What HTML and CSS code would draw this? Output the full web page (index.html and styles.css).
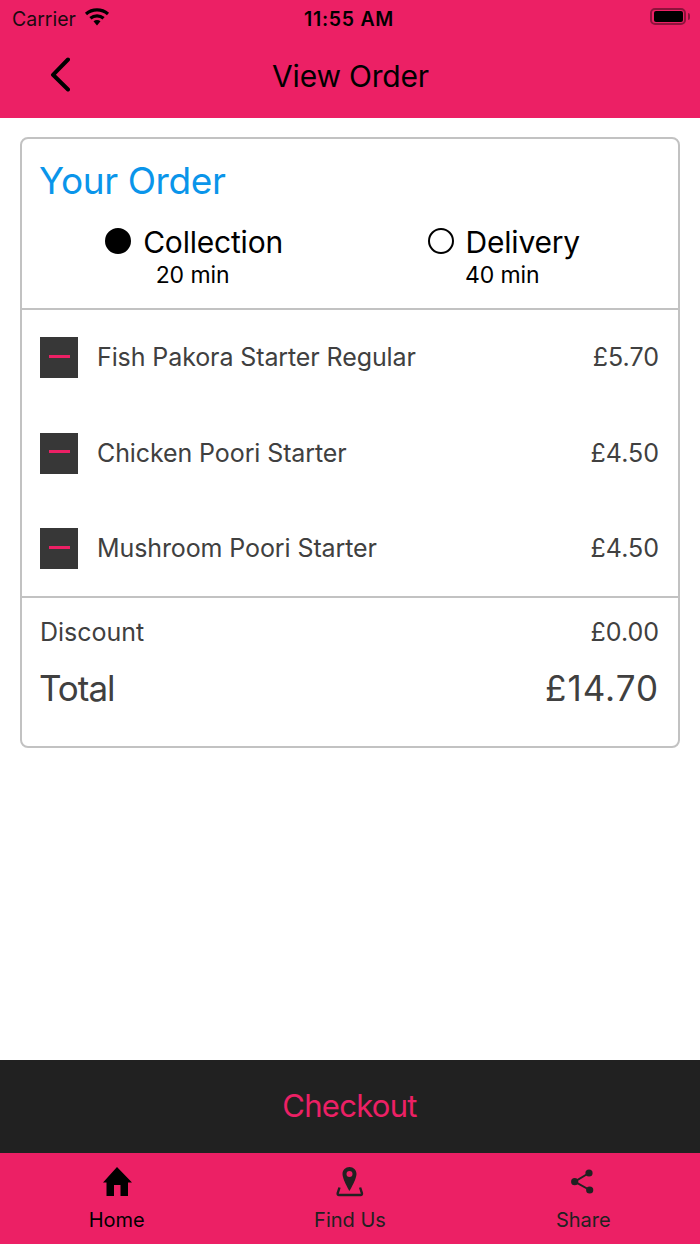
FILE: index.html
```html
<!DOCTYPE html>
<html lang="en">
<head>
<meta charset="utf-8">
<title>View Order</title>
<link rel="stylesheet" href="styles.css">
</head>
<body>
<div class="app">
  <header class="top">
    <div class="status">
      <div class="status-left">
        <span class="carrier">Carrier</span>
        <svg class="wifi" width="26" height="18" viewBox="0 0 26 18"><path d="M2 6C8.300.6 17.700.6 24 6M6.400 10.300C10.200 7 15.800 7 19.600 10.300" fill="none" stroke="#000" stroke-width="3.200"/><path d="M9.500 13.300C11.500 11.700 14.500 11.700 16.500 13.300L13 17.500z"/></svg>
      </div>
      <span class="time">11:55 AM</span>
      <div class="battery"><span class="battery-level"></span><span class="battery-cap"></span></div>
    </div>
    <div class="navbar">
      <svg class="back" width="24" height="38" viewBox="0 0 24 38"><path d="M22 3.500 7 18.800l15 14.700" fill="none" stroke="#000" stroke-width="4" stroke-linecap="round" stroke-linejoin="round"/></svg>
      <h1 class="title">View Order</h1>
    </div>
  </header>

  <main class="content">
    <section class="card">
      <div class="card-head">
        <h2 class="your-order">Your Order</h2>
        <div class="options">
          <div class="option option-collection">
            <div class="option-main"><span class="radio radio-on"></span><span class="option-name">Collection</span></div>
            <div class="option-time">20 min</div>
          </div>
          <div class="option option-delivery">
            <div class="option-main"><span class="radio"></span><span class="option-name">Delivery</span></div>
            <div class="option-time">40 min</div>
          </div>
        </div>
      </div>
      <div class="items">
        <div class="item"><span class="minus"><span class="minus-bar"></span></span><span class="item-name">Fish Pakora Starter Regular</span><span class="item-price">£5.70</span></div>
        <div class="item"><span class="minus"><span class="minus-bar"></span></span><span class="item-name">Chicken Poori Starter</span><span class="item-price">£4.50</span></div>
        <div class="item"><span class="minus"><span class="minus-bar"></span></span><span class="item-name">Mushroom Poori Starter</span><span class="item-price">£4.50</span></div>
      </div>
      <div class="totals">
        <div class="row discount"><span>Discount</span><span>£0.00</span></div>
        <div class="row total"><span class="total-label">Total</span><span class="total-value">£14.70</span></div>
      </div>
    </section>
  </main>

  <button class="checkout">Checkout</button>

  <nav class="tabs">
    <div class="tab tab-active">
      <svg width="36" height="36" viewBox="0 0 36 36"><path d="M18 4 4 19.500h3.500V33H15V22h6.500v11H29V19.500h4z" fill="#000"/></svg>
      <span class="tab-label">Home</span>
    </div>
    <div class="tab">
      <svg width="36" height="36" viewBox="0 0 36 36"><path d="M17.500 4C13.600 4 10.500 7.100 10.500 11c0 5.500 7 17 7 17s7-11.500 7-17c0-3.900-3.100-7-7-7zm0 4a3 3 0 1 1 0 6 3 3 0 0 1 0-6z" fill="#212121" fill-rule="evenodd"/><path d="M7.500 24.500 5.700 30.200c-.3 1 .2 1.800 1.300 1.800h21.600c1.100 0 1.600-.8 1.300-1.800l-1.800-5.700" fill="none" stroke="#212121" stroke-width="2.400"/></svg>
      <span class="tab-label">Find Us</span>
    </div>
    <div class="tab">
      <svg width="36" height="36" viewBox="0 0 36 36"><g fill="#212121"><circle cx="24" cy="10" r="3.600"/><circle cx="9.700" cy="18.700" r="3.600"/><circle cx="24.700" cy="27" r="3.600"/></g><path d="M24 10 9.700 18.700 24.700 27" fill="none" stroke="#212121" stroke-width="2"/></svg>
      <span class="tab-label">Share</span>
    </div>
  </nav>
</div>
</body>
</html>
```

FILE: styles.css
```css
* { box-sizing: border-box; margin: 0; padding: 0; }
html, body { height: 100%; }
body { background: #fff; font-family: "Inter", "Liberation Sans", sans-serif; color: #000; }
.app { width: 700px; height: 1244px; display: flex; flex-direction: column; overflow: hidden; }

.top { height: 118px; background: #ec2065; flex: none; }
.status { height: 37px; padding: 4px 14px 0 12px; display: grid; grid-template-columns: 1fr auto 1fr; align-items: center; }
.status-left { display: flex; align-items: center; gap: 8px; margin-top: -4px; }
.carrier { font-size: 19.500px; color: #1a0a10; }
.wifi { margin-top: -4px; }
.time { font-size: 19.500px; font-weight: 600; letter-spacing: .7px; margin-top: -4px; }
.battery { justify-self: end; width: 36px; height: 17px; display: flex; align-items: center; margin-top: -8px; position: relative; border: 2px solid rgba(0,0,0,.4); border-radius: 5px; padding: 1px 1px 1px 2px; }
.battery-level { width: 100%; height: 100%; background: #000; border-radius: 2px; }
.battery-cap { position: absolute; right: -6px; top: 3px; width: 2px; height: 7px; background: rgba(0,0,0,.4); border-radius: 0 2px 2px 0; }

.navbar { height: 81px; display: flex; align-items: center; position: relative; padding-left: 46px; padding-bottom: 6px; }
.back { flex: none; }
.title { position: absolute; left: 1px; right: 0; top: 19px; text-align: center; font-size: 30px; line-height: 40px; font-weight: 400; letter-spacing: -.2px; }

.content { flex: 1; padding: 19px 20px 0; }
.card { height: 611px; border: 2px solid #c2c2c2; border-radius: 8px; display: flex; flex-direction: column; }
.card-head { height: 171px; border-bottom: 2px solid #c2c2c2; padding: 20px 18px 0; flex: none; }
.your-order { font-size: 37px; line-height: 44px; font-weight: 400; color: #0a95ea; letter-spacing: -.4px; margin-left: -1px; }
.options { display: flex; margin: 21px 0 0 12.500px; }
.option { display: flex; flex-direction: column; align-items: center; }
.option-collection { width: 290px; }
.option-delivery { width: 320px; margin-left: 12px; }
.option-main { display: flex; align-items: center; gap: 12px; height: 36px; }
.radio { width: 26px; height: 26px; border: 2.500px solid #000; border-radius: 50%; flex: none; margin-top: -2px; }
.radio-on { background: #000; }
.option-name { font-size: 30px; line-height: 36px; letter-spacing: -.2px; }
.option-time { font-size: 23px; line-height: 28px; margin: 1px 3px 0 0; letter-spacing: -.1px; }

.items { height: 288px; border-bottom: 2px solid #c2c2c2; padding: 27px 18px 0; flex: none; display: flex; flex-direction: column; gap: 54px; }
.item { height: 41.500px; display: flex; align-items: center; color: #404040; font-size: 25px; }
.minus { width: 38px; height: 41px; background: #373737; display: flex; align-items: center; justify-content: center; flex: none; }
.minus-bar { width: 21px; height: 3px; background: #ec2065; margin-top: -3px; }
.item-name { margin-left: 19px; flex: 1; letter-spacing: -.1px; padding-bottom: 1px; }
.item-price { margin-right: 1px; padding-bottom: 1px; }

.totals { padding: 17px 18px 0 18px; color: #404040; }
.row { display: flex; justify-content: space-between; }
.discount { font-size: 25px; line-height: 34px; padding-right: 1px; }
.total { font-size: 35px; line-height: 42px; margin-top: 18px; padding-right: 1px; }
.total-label { letter-spacing: -1px; margin-left: -1px; }
.total-value { letter-spacing: 1px; }

.checkout { height: 93px; flex: none; background: #212121; border: none; color: #ec2065; font: 400 31px "Inter", "Liberation Sans", sans-serif; width: 100%; letter-spacing: -.7px; padding: 0 1px 2px 0; }

.tabs { height: 91px; flex: none; background: #ec2065; display: flex; }
.tab { width: 233.330px; display: flex; flex-direction: column; align-items: center; padding-top: 10px; color: #212121; }
.tab-active { color: #000; }
.tab-label { font-size: 20px; line-height: 26px; margin-top: 8px; }
```
